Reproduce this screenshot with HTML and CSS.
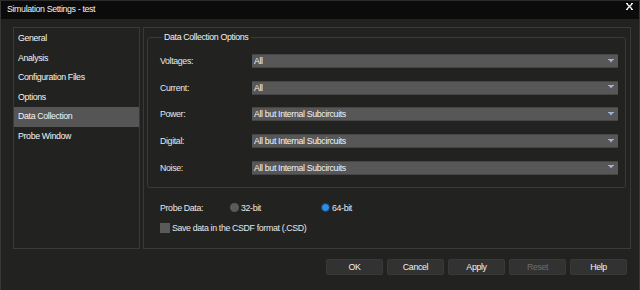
FILE: index.html
```html
<!DOCTYPE html>
<html lang="en">
<head>
    <meta charset="UTF-8">
    <title>Simulation Settings - test</title>
    <link rel="stylesheet" href="styles.css">
</head>
<body>
    <div class="window">
        <header class="titlebar">
            <span class="title">Simulation Settings - test</span>
            <svg class="close" width="7" height="7" viewBox="0 0 7 7">
                <path d="M1 1 L6 6 M6 1 L1 6" stroke="#f0f0f0" stroke-width="1.4"/>
                <path d="M0 0 H2 V1 H0 Z M5 0 H7 V1 H5 Z M0 6 H2 V7 H0 Z M5 6 H7 V7 H5 Z" fill="#f0f0f0"/>
            </svg>
        </header>

        <div class="main">
            <ul class="nav">
                <li>General</li>
                <li>Analysis</li>
                <li>Configuration Files</li>
                <li>Options</li>
                <li class="active">Data Collection</li>
                <li>Probe Window</li>
            </ul>

            <section class="page">
                <fieldset class="group">
                    <legend>Data Collection Options</legend>
                    <div class="row">
                        <span class="label">Voltages:</span>
                        <div class="select"><span>All</span><svg class="arrow" width="6" height="4" viewBox="0 0 6 4"><path d="M0 0 H6 V1 H5 L3 3.5 L1 1 H0 Z" fill="#9fb4d4"/></svg></div>
                    </div>
                    <div class="row">
                        <span class="label">Current:</span>
                        <div class="select"><span>All</span><svg class="arrow" width="6" height="4" viewBox="0 0 6 4"><path d="M0 0 H6 V1 H5 L3 3.5 L1 1 H0 Z" fill="#9fb4d4"/></svg></div>
                    </div>
                    <div class="row">
                        <span class="label">Power:</span>
                        <div class="select"><span>All but Internal Subcircuits</span><svg class="arrow" width="6" height="4" viewBox="0 0 6 4"><path d="M0 0 H6 V1 H5 L3 3.5 L1 1 H0 Z" fill="#9fb4d4"/></svg></div>
                    </div>
                    <div class="row">
                        <span class="label">Digital:</span>
                        <div class="select"><span>All but Internal Subcircuits</span><svg class="arrow" width="6" height="4" viewBox="0 0 6 4"><path d="M0 0 H6 V1 H5 L3 3.5 L1 1 H0 Z" fill="#9fb4d4"/></svg></div>
                    </div>
                    <div class="row">
                        <span class="label">Noise:</span>
                        <div class="select"><span>All but Internal Subcircuits</span><svg class="arrow" width="6" height="4" viewBox="0 0 6 4"><path d="M0 0 H6 V1 H5 L3 3.5 L1 1 H0 Z" fill="#9fb4d4"/></svg></div>
                    </div>
                </fieldset>

                <div class="probe">
                    <span class="probe-label">Probe Data:</span>
                    <span class="option"><span class="radio"></span>32-bit</span>
                    <span class="option"><span class="radio checked"></span>64-bit</span>
                </div>
                <div class="check-row">
                    <span class="checkbox"></span>Save data in the CSDF format (.CSD)
                </div>
            </section>
        </div>

        <footer class="buttons">
            <button class="btn">OK</button>
            <button class="btn">Cancel</button>
            <button class="btn">Apply</button>
            <button class="btn" disabled>Reset</button>
            <button class="btn">Help</button>
        </footer>
    </div>
</body>
</html>
```

FILE: styles.css
```css
:root {
    --bg: #222321;
    --titlebar: #0b0b0b;
    --line: #3a3b39;
    --text: #e8e8e8;
    --field: #575757;
    --selected: #555555;
    --button: #313231;
}

* {
    margin: 0;
    padding: 0;
    box-sizing: border-box;
    font-family: 'Liberation Sans', Arial, sans-serif;
    letter-spacing: -0.35px;
}

body {
    background-color: var(--bg);
    width: 640px;
    height: 290px;
    overflow: hidden;
}

.window {
    width: 640px;
    height: 290px;
    border-left: 1px solid #363736;
    border-right: 1px solid #363736;
    border-top: 1px solid #2c2c2c;
    color: var(--text);
    font-size: 8.8px;
}

.titlebar {
    height: 18px;
    background-color: var(--titlebar);
    display: flex;
    align-items: center;
    padding: 0 6px 2px 6px;
}

.title {
    color: #f2f2f2;
    font-size: 8.8px;
}

.close {
    display: block;
    flex: none;
    margin: -6px 0 0 auto;
}

.main {
    display: flex;
    gap: 3px;
    padding: 8px 8px 0 12px;
}

.nav {
    list-style: none;
    width: 127px;
    height: 222px;
    border: 1px solid var(--line);
    padding-top: 1px;
}

.nav li {
    height: 19.5px;
    line-height: 19.5px;
    padding-left: 4px;
    color: #f4f4f4;
}

.nav li.active {
    background-color: var(--selected);
}

.page {
    flex: 1;
    height: 222px;
    border: 1px solid var(--line);
    padding: 3px 4px 0 3px;
}

.group {
    border: 1px solid var(--line);
    border-radius: 3px;
    padding: 11px 7px 12px 12px;
    display: flex;
    flex-direction: column;
    gap: 12.7px;
}

.group legend {
    margin-left: 2px;
    padding: 0 3px 0 2px;
    line-height: 12px;
    color: #f2f2f2;
}

.row {
    display: flex;
    align-items: center;
    height: 14px;
}

.label {
    width: 92px;
}

.select {
    flex: 1;
    height: 14px;
    background-color: var(--field);
    border-top: 1px solid #444544;
    border-bottom: 1px solid #444544;
    display: flex;
    align-items: center;
    justify-content: space-between;
    padding: 0 4px 0 2px;
    color: #f4f4f4;
}

.arrow {
    margin-top: -1px;
}

.probe {
    display: flex;
    align-items: center;
    height: 12px;
    margin-top: 14px;
    padding-left: 13px;
}

.probe-label {
    width: 70px;
}

.option {
    display: flex;
    align-items: center;
    width: 91px;
}

.radio {
    width: 9px;
    height: 9px;
    border-radius: 50%;
    background-color: #5a5a5a;
    margin-right: 2px;
}

.radio.checked {
    background-color: #1e90ff;
    border: 1px solid #3a3a3a;
}

.check-row {
    display: flex;
    align-items: center;
    margin-top: 9px;
    padding-left: 13px;
}

.checkbox {
    width: 10px;
    height: 10px;
    background-color: #5a5a5a;
    margin-right: 2px;
}

.buttons {
    display: flex;
    justify-content: flex-end;
    gap: 4px;
    padding: 10px 12px 0 0;
}

.btn {
    width: 57px;
    height: 16px;
    background-color: var(--button);
    border: 1px solid #383938;
    border-radius: 2px;
    color: #f2f2f2;
    font-size: 8.8px;
}

.btn:disabled {
    color: #6e6e6e;
}
```
